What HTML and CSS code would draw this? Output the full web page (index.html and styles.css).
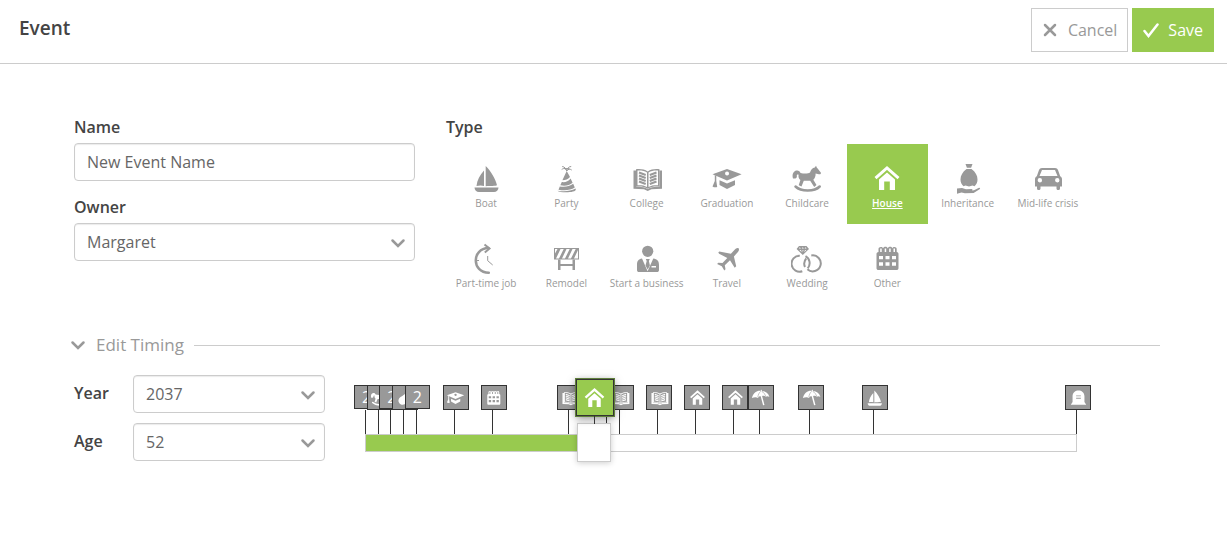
FILE: index.html
```html
<!DOCTYPE html>
<html lang="en">
<head>
    <meta charset="UTF-8">
    <meta name="viewport" content="width=device-width, initial-scale=1.0">
    <title>Event</title>
    <link rel="stylesheet" href="styles.css">
</head>
<body>
    <!-- Icon sprite -->
    <svg class="sprite" aria-hidden="true">
        <symbol id="boat" viewBox="0 0 32 32">
            <path d="M15.700 4C21 9 25.500 17 27 23.300 23 24.600 19 23.600 15.700 24.300zM14 8.500V24c-2.500-.8-5-.6-7.500 0C7 18 10 13 14 8.500zM4.500 25.500h24c0 2.500-2 4.500-4.500 4.500H9c-2.500 0-4.500-2-4.500-4.500z"/>
        </symbol>
        <symbol id="party" viewBox="0 0 32 32">
            <path d="M16.700 9l3.300 6c-2 2.300-4.500 3.300-7.600 3.300zM20.600 16.500l2 4.200c-3 2.800-7.500 3.500-12.300 2.600l1.500-3.200c3.400.6 6.300-.6 8.800-3.600zM23.200 21.800l1.600 3.700c-4 2.600-9.500 3.400-16.300 2.200l1.300-3.200c4.800.8 10 0 13.400-2.700zM25.500 26.600c1.500 2.400-2.500 3.600-7.500 3.700-4.500.1-9.200 0-10.500-1.500 6.500 1.100 13 .6 18-2.200z"/>
            <path class="line" d="M16.700 9c-1-3-3-3-5-1.500M16.700 9c-.5-2-2-4.300-4.500-4.500M16.700 9c.5-2.500 2-4.500 4.500-4.500M16.700 9c1.500-2.300 3.500-2 5-1M14 6.500l5.500.2"/>
        </symbol>
        <symbol id="college" viewBox="0 0 32 32">
            <path d="M2.500 8.500H5v16.300c4.500-.4 8.500.2 11.700 2.200 3.300-2 7.300-2.600 11.800-2.200V8.500H31v18.300l-10.500.5-3.800 1.700-3.700-1.700-10.500-.5z"/>
            <path fill-rule="evenodd" d="M5 7.200c4-.6 8.500 0 11.700 2.200C20 7.200 24.500 6.600 28.500 7.200v17.500c-4.500-.4-8.500 0-11.800 2-3.200-2-7.200-2.400-11.700-2zM6.500 8.500v14.800c3.300-.2 6.600.1 9.500 1.600v-14.500C13 8.700 10 8.200 6.500 8.500zM27 8.500c-3.500-.3-6.500.2-9.500 1.900v14.500c3-1.500 6.200-1.800 9.500-1.600z"/>
            <path class="rule" d="M8 10.500l6.700 2.500M8 13.500l6.700 2.500M8 16.500l6.700 2.500M8 19.500l6.700 2.500M25.500 10.500l-6.700 2.500M25.500 13.500l-6.700 2.500M25.500 16.500l-6.700 2.500M25.500 19.500l-6.700 2.500"/>
        </symbol>
        <symbol id="graduation" viewBox="0 0 32 32">
            <path fill-rule="evenodd" d="M1.500 12.200L16 7l14.600 5.200L16 18.600zM16 9.500a2 2 0 1 0 .1 4 2 2 0 0 0-.1-4z"/>
            <path d="M8.500 18.300l7.500 3.300 8-3.300v4.600l-8 4.100-7.500-4.100zM3.800 13l1.500.7v5.300l.9 6c-1.500.6-3.200.4-4.700-.5l2.300-5.500z"/>
        </symbol>
        <symbol id="childcare" viewBox="0 0 32 32">
            <path d="M2 16.500c-1.200-4 .3-7.500 3.500-8 2-.3 3.500.8 4 2.500 3.500.8 7.500 1 9.500-.5 1-3 2.500-4.500 4.800-5L25 3.800l1 2.200c1 .8 1.500 1.500 3.800 4.500.5 1.500-.7 2-2 1.800l-3.200-.8c.2 3-1 5-2.300 6.200l3.200 5.300-2.300 2-4-6.300h-6.400l-2.300 5.800-2.800-1.200 1.700-5.300c-1.600-1.300-2.200-3.300-1.800-5.300-1-.5-1.800 0-1.800 1.200.3 1.500-.3 2.700-3.800 2.600z"/>
            <path class="thick" d="M4.500 24.500c5.500 5.300 19 5.300 24.200 0"/>
        </symbol>
        <symbol id="house" viewBox="0 0 32 32">
            <path class="roof" d="M4.500 16.200L16 6l11.500 10.200"/>
            <path d="M16 10.500l8 7V28h-5.200v-8.500h-5.600V28H8V17.500z"/>
        </symbol>
        <symbol id="inheritance" viewBox="0 0 32 32">
            <path d="M13.500 2h7l-1.400 3.800h-4.200zM14.500 7h5c4 3 6 6.500 6 10.500 0 3-1 5-3 6.700l-2-.7-3.500 1-3.500-1-2 .7C9.500 22.500 8.500 20.500 8.500 17.500c0-4 2-7.500 6-10.500z"/>
            <path d="M5 26.500l5-.5 4 1.200 5.500-.2c1 .1 1.400 1 .5 1.500l2-.2 5-2.500c1.300-.2 1.400.8.600 1.500l-6 3.700-8.600.2-3.500-.7-4.500 1.300z"/>
        </symbol>
        <symbol id="car" viewBox="0 0 32 32">
            <path fill-rule="evenodd" d="M10 6h13c1.500 0 2.500.7 3 2l2.200 6.300c1.200.5 1.800 1.500 1.800 3v7.200h-2v2c0 2-3.500 2-3.500 0v-2h-16v2c0 2-3.500 2-3.500 0v-2H3v-7.200c0-1.500.6-2.500 1.800-3L7 8c.5-1.300 1.500-2 3-2zm0 2L7.500 14h18L23 8zM7.800 16a2.200 2.200 0 1 0 .1 4.400 2.200 2.200 0 0 0-.1-4.400zm17.400 0a2.200 2.200 0 1 0 .1 4.400 2.200 2.200 0 0 0-.1-4.400z"/>
        </symbol>
        <symbol id="parttime" viewBox="0 0 32 32">
            <path class="thick" d="M18.500 6C1.500 6.500 1.500 30.500 18.800 30.700"/>
            <path class="medium" d="M14.500 2.500l5 4-4.700 4"/>
            <path class="line" d="M5 18.500h4M17.700 14v4.700l5 4.300"/>
        </symbol>
        <symbol id="remodel" viewBox="0 0 32 32">
            <path fill-rule="evenodd" d="M4 6h25v11.500H4zM5 7v4.500L7.500 7zm5.500 0L6 16.500h3L13.700 7zm6 0L12 16.500h3L19.700 7zm6 0L18 16.500h3L25.700 7zM28 8l-4 8.500h4z"/>
            <path d="M8 17.500h2.500V22h12v-4.500H25V28h-2.500v-4h-12v4H8z"/>
        </symbol>
        <symbol id="business" viewBox="0 0 32 32">
            <circle cx="16.700" cy="9.300" r="5.600"/>
            <path fill-rule="evenodd" d="M11 16.500l5.600 12.800L22.300 16.500c4 .5 5.700 2.500 5.700 6.500v5c0 1.500-.8 2-2 2H8c-1.200 0-2-.5-2-2v-5c0-4 1.500-6 5-6.500zM20.500 24v1.500H25V24z"/>
            <path d="M14.800 17h4l-.9 2 1 4.500-2.200 4-2.200-4 1.200-4.500z"/>
        </symbol>
        <symbol id="travel" viewBox="0 0 32 32">
            <path d="M27.500 6.300c1 1 .4 3-1 4.300l-3.600 3.800 2.300 9.800-1.500 1.600-4.700-7.600-5.200 5 .7 4-1.200 1.200-2.500-4.200-4.700-2.300 1.200-1.200 4.200.4 4.800-5.200-8.200-4.200-.8-1.200 1-1 11.600 2.300 3.500-3.900c1.300-1.400 3.200-2.500 4.100-1.600z"/>
        </symbol>
        <symbol id="wedding" viewBox="0 0 32 32">
            <path class="ring" d="M8.800 13.700a8 8 0 1 0 2.500 15.500M14.500 14.100a8 8 0 0 1 2.200 12.200M20.300 13.500a8 8 0 1 1-3.900 13.800M14 25a8 8 0 0 1 1.200-8.500"/>
            <path fill-rule="evenodd" d="M8 4h7.500L18 7l-6.200 6L5.600 7zm.7 1.200L8 6.500h2zm3 0l-1 1.300h2.200zm3 0l-1.200 1.300h2zM8.500 8l2.200 2.300L10 8zm3 0l.4 2.500.5-2.500zm2.500 0l-.8 2.300L15.300 8z"/>
        </symbol>
        <symbol id="other" viewBox="0 0 32 32">
            <path fill-rule="evenodd" d="M7.500 10V7c0-2.300 4-2.700 4.500-.5.500-2.200 4.500-2.200 4.700 0 .5-2.200 4.500-2.200 4.700 0 .5-2.200 4.300-1.800 4.300.5v3c1.300.2 1.800 1 1.800 2v14c0 1.500-.8 2-2 2h-18c-1.200 0-2-.5-2-2V12c0-1 .7-1.800 2-2zm1.700-3.500V10h1.500V6.500zm4.500 0V10h1.500V6.500zm4.500 0V10h1.500V6.500zm4.300 0V10H24V6.500zM8 14v3.200h4V14zm6.500 0v3.200h4V14zm6.500 0v3.200h4V14zM8 20.300v3.500h4v-3.500zm6.500 0v3.500h4v-3.500zm6.500 0v3.500h4v-3.500z"/>
        </symbol>
        <symbol id="umbrella" viewBox="0 0 32 32">
            <path d="M1.500 17C4 8 10 4 16.500 4.800l.5-1.800 1.500.3-.2 1.600c6.500.6 11.200 4.100 12.700 10.100-2-1.500-4.200-1.700-6.200-.3-1.600-1.600-4-2-6.100-1.200l4 15-2.400.6-4-15c-2-.2-3.700.8-4.500 2.700-2.500-1.500-6-1.800-10.300.2z"/>
            <path class="rib" d="M16.500 5.500c-3 2.500-4.500 6-5 10M18 5.500c3.500 2 5.800 5 6.800 9"/>
        </symbol>
        <symbol id="grave" viewBox="0 0 32 32">
            <path fill-rule="evenodd" d="M3 28l3-4.500V14C6 1 26 1 26 14v9.500l3 4.500zM12 12.500V14h8v-1.500zm0 4V18h8v-1.500z"/>
        </symbol>
        <symbol id="rattle" viewBox="0 0 32 32">
            <path d="M6 26c-4-5-1-10 4-12L22 5l6 4-5 6c2 5-1 9-5 10-4 4-9 4-12 1z"/>
        </symbol>
        <symbol id="chevron" viewBox="0 0 16 16">
            <path class="thick" d="M2.500 5.500L8 11l5.500-5.500"/>
        </symbol>
        <symbol id="cross" viewBox="0 0 16 16">
            <path class="thick" d="M3 3l10 10M13 3L3 13"/>
        </symbol>
        <symbol id="check" viewBox="0 0 16 16">
            <path class="thick" d="M1.500 9l4 5L14.500 2.500"/>
        </symbol>
    </svg>

    <header class="header">
        <h1 class="title">Event</h1>
        <div class="actions">
            <button type="button" class="btn btn-cancel"><svg class="btn-icon"><use href="#cross"/></svg>Cancel</button>
            <button type="submit" form="event-form" class="btn btn-save"><svg class="btn-icon"><use href="#check"/></svg>Save</button>
        </div>
    </header>

    <form id="event-form" class="form">
        <div class="details">
            <div class="fields">
                <div class="field">
                    <label for="name">Name</label>
                    <input type="text" id="name" class="control" value="New Event Name">
                </div>
                <div class="field">
                    <label for="owner">Owner</label>
                    <div class="select">
                        <select id="owner" class="control"><option>Margaret</option></select>
                        <svg class="arrow"><use href="#chevron"/></svg>
                    </div>
                </div>
            </div>

            <fieldset class="types">
                <legend>Type</legend>
                <div class="type-list">
                    <label class="type"><input type="radio" name="type"><svg><use href="#boat"/></svg><span>Boat</span></label>
                    <label class="type"><input type="radio" name="type"><svg><use href="#party"/></svg><span>Party</span></label>
                    <label class="type"><input type="radio" name="type"><svg><use href="#college"/></svg><span>College</span></label>
                    <label class="type"><input type="radio" name="type"><svg><use href="#graduation"/></svg><span>Graduation</span></label>
                    <label class="type"><input type="radio" name="type"><svg><use href="#childcare"/></svg><span>Childcare</span></label>
                    <label class="type"><input type="radio" name="type" checked><svg><use href="#house"/></svg><span>House</span></label>
                    <label class="type"><input type="radio" name="type"><svg><use href="#inheritance"/></svg><span>Inheritance</span></label>
                    <label class="type"><input type="radio" name="type"><svg><use href="#car"/></svg><span>Mid-life crisis</span></label>
                    <label class="type"><input type="radio" name="type"><svg><use href="#parttime"/></svg><span>Part-time job</span></label>
                    <label class="type"><input type="radio" name="type"><svg><use href="#remodel"/></svg><span>Remodel</span></label>
                    <label class="type"><input type="radio" name="type"><svg><use href="#business"/></svg><span>Start a business</span></label>
                    <label class="type"><input type="radio" name="type"><svg><use href="#travel"/></svg><span>Travel</span></label>
                    <label class="type"><input type="radio" name="type"><svg><use href="#wedding"/></svg><span>Wedding</span></label>
                    <label class="type"><input type="radio" name="type"><svg><use href="#other"/></svg><span>Other</span></label>
                </div>
            </fieldset>
        </div>

        <button type="button" class="section-toggle" aria-expanded="true"><svg class="toggle-icon"><use href="#chevron"/></svg>Edit Timing</button>

        <div class="timing">
            <div class="timing-fields">
                <label for="year">Year</label>
                <div class="select">
                    <select id="year" class="control"><option>2037</option></select>
                    <svg class="arrow"><use href="#chevron"/></svg>
                </div>
                <label for="age">Age</label>
                <div class="select">
                    <select id="age" class="control"><option>52</option></select>
                    <svg class="arrow"><use href="#chevron"/></svg>
                </div>
            </div>

            <div class="timeline">
                <!-- --year is the number of years from the start of the plan -->
                <div class="pins">
                    <div class="pin count" style="--year: 0">2</div>
                    <div class="pin" style="--year: 1"><svg><use href="#childcare"/></svg></div>
                    <div class="pin count" style="--year: 2">2</div>
                    <div class="pin" style="--year: 3"><svg><use href="#rattle"/></svg></div>
                    <div class="pin count" style="--year: 4">2</div>
                    <div class="pin" style="--year: 7"><svg><use href="#graduation"/></svg></div>
                    <div class="pin" style="--year: 10"><svg><use href="#other"/></svg></div>
                    <div class="pin" style="--year: 16"><svg><use href="#college"/></svg></div>
                    <div class="pin" style="--year: 19"><svg><use href="#college"/></svg></div>
                    <div class="pin" style="--year: 20"><svg><use href="#college"/></svg></div>
                    <div class="pin" style="--year: 23"><svg><use href="#college"/></svg></div>
                    <div class="pin" style="--year: 26"><svg><use href="#house"/></svg></div>
                    <div class="pin" style="--year: 29"><svg><use href="#house"/></svg></div>
                    <div class="pin" style="--year: 31"><svg><use href="#umbrella"/></svg></div>
                    <div class="pin" style="--year: 35"><svg><use href="#umbrella"/></svg></div>
                    <div class="pin" style="--year: 40"><svg><use href="#boat"/></svg></div>
                    <div class="pin" style="--year: 56"><svg><use href="#grave"/></svg></div>
                    <div class="pin current" style="--year: 18"><svg><use href="#house"/></svg></div>
                </div>
                <div class="track">
                    <div class="fill" style="--year: 18"></div>
                    <input type="range" class="slider" min="0" max="56" value="18" aria-label="Event year">
                </div>
            </div>
        </div>
    </form>
</body>
</html>
```
FILE: styles.css
```css
* { box-sizing: border-box; }
body { margin: 0; background: #fff; color: #333; font: 16px/24px "Open Sans", sans-serif; }
svg { display: block; fill: currentColor; }
button, input, select { font: inherit; }
label, legend { color: #444; font-weight: 600; }

.sprite { position: absolute; width: 0; height: 0; }
.line, .rule, .rib, .medium, .thick, .roof, .ring { fill: none; stroke: currentColor; }
.line { stroke-width: 1; }
.rule { stroke-width: 2; }
.rib { stroke: #999; stroke-width: 1; }
.medium, .ring { stroke-width: 2; }
.thick { stroke-width: 2.5; stroke-linecap: round; }
.roof { stroke-width: 3; }

/* Header */
.header { display: flex; justify-content: space-between; align-items: flex-start; height: 64px; padding: 8px 13px 0 19px; border-bottom: 1px solid #ccc; }
.title { margin: 6px 0 0; color: #444; font-size: 19px; line-height: 28px; font-weight: 600; }
.actions { display: flex; gap: 4px; }
.btn { display: flex; align-items: center; gap: 9px; height: 44px; padding: 0 10px; border: 1px solid #ccc; background: #fff; color: #999; cursor: pointer; }
.btn-cancel { gap: 10px; }
.btn-save { border-color: #98ca4f; background: #98ca4f; color: #fff; }
.btn-icon { width: 16px; height: 16px; }

/* Form */
.form { padding: 51px 67px 40px 74px; }
.details { display: grid; grid-template-columns: 341px 1fr; gap: 31px; }
.fields { display: flex; flex-direction: column; gap: 14px; }
.field { display: flex; flex-direction: column; gap: 4px; }
.control { display: block; width: 100%; height: 38px; padding: 0 12px; border: 1px solid #ccc; border-radius: 4px; background: #fff; box-shadow: inset 0 1px 1px rgba(0, 0, 0, 0.08); color: #666; appearance: none; }
.select { position: relative; color: #999; }
.arrow { position: absolute; right: 9px; top: 12px; width: 16px; height: 16px; pointer-events: none; }

/* Event types */
.types { min-width: 0; margin: 0; padding: 0; border: 0; }
.types legend { padding: 0; }
.type-list { display: grid; grid-template-columns: repeat(8, 1fr); max-width: 642px; margin-top: 5px; }
.type { display: flex; flex-direction: column; align-items: center; gap: 2px; height: 80px; padding-top: 18px; color: #999; font-size: 10px; line-height: 14px; font-weight: 400; white-space: nowrap; cursor: pointer; }
.type input { position: absolute; opacity: 0; pointer-events: none; }
.type svg { width: 32px; height: 32px; }
.type:has(input:checked) { background: #98ca4f; color: #fff; font-weight: 600; text-decoration: underline; }

/* Timing */
.section-toggle { display: flex; align-items: center; gap: 10px; width: 100%; margin-top: 29px; padding: 0; border: 0; background: none; color: #999; font-size: 17px; line-height: 24px; cursor: pointer; }
.section-toggle::after { content: ""; flex: 1; height: 1px; background: #ccc; }
.toggle-icon { width: 16px; height: 16px; margin-left: -4px; }
.timing { display: grid; grid-template-columns: 251px 1fr; gap: 40px; margin-top: 18px; }
.timing-fields { display: grid; grid-template-columns: 1fr 192px; gap: 10px 0; line-height: 36px; }

/* Timeline */
.timeline { margin-right: 83px; }
.pins { position: relative; height: 59px; }
.pin { position: absolute; left: calc((100% - 1px) * var(--year) / 56); top: 10px; display: flex; align-items: center; justify-content: center; width: 26px; height: 25px; margin-left: -11px; border: 1px solid #333; background: #999; color: #fff; }
.pin svg { width: 19px; height: 19px; }
.pin::after { content: ""; position: absolute; left: 10px; top: 24px; width: 1px; height: 25px; background: #333; }
.count { width: 25px; height: 24px; }
.current { z-index: 2; top: 4px; width: 38px; height: 37px; margin-left: -18px; background: #98ca4f; box-shadow: 0 0 0 1px #5f7f3b, 0 2px 8px rgba(0, 0, 0, 0.5); }
.current svg { width: 25px; height: 25px; }
.current::after { left: 17px; top: 36px; height: 8px; }
.track { position: relative; height: 18px; border: 1px solid #ccc; }
.fill { width: calc(100% * var(--year) / 56); height: 100%; background: #98ca4f; }
.slider { position: absolute; left: -18px; top: -13px; width: calc(100% + 36px); height: 40px; margin: 0; background: none; appearance: none; cursor: pointer; }
.slider::-webkit-slider-thumb { width: 34px; height: 39px; border: 1px solid #ccc; background: #fff; box-shadow: 0 1px 6px rgba(0, 0, 0, 0.2); appearance: none; }
```
